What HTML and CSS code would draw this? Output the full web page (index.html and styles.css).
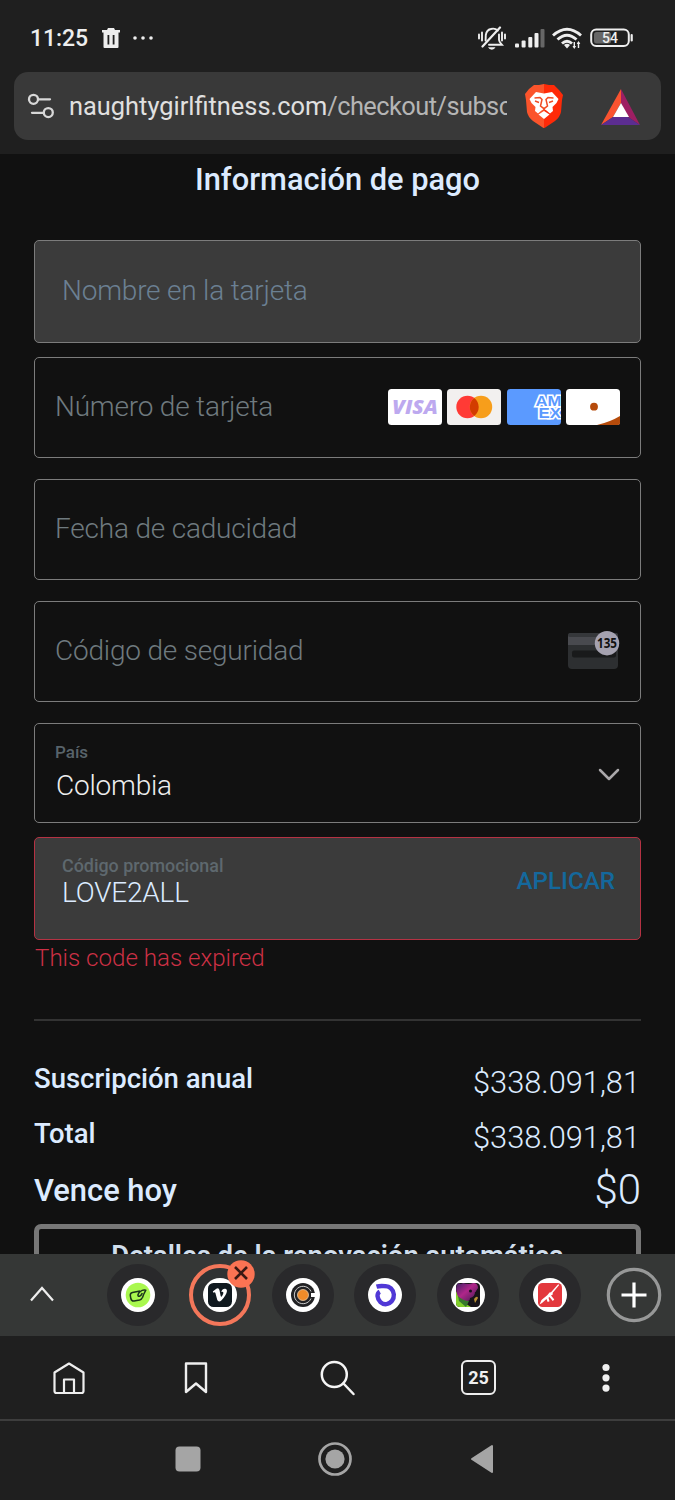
FILE: index.html
```html
<!DOCTYPE html>
<html lang="es">
<head>
<meta charset="utf-8">
<title>Información de pago</title>
<link rel="stylesheet" href="styles.css">
</head>
<body>
<div class="screen">
  <header class="browser-top">
    <div class="status">
      <span class="clock">11:25</span>
      <svg class="trash" width="18" height="20" viewBox="0 0 18 20"><path d="M0 2h5l1-2h6l1 2h5v2.400H0zM1.500 4h15v15a1 1 0 0 1-1 1h-13a1 1 0 0 1-1-1z" fill="#eee"/><path d="M6.400 7v9.500M11.600 7v9.500" stroke="#1f1f1f" stroke-width="1.800"/></svg>
      <svg class="dots" width="20" height="4" viewBox="0 0 20 4"><g fill="#eee"><circle cx="2" cy="2" r="1.800"/><circle cx="10" cy="2" r="1.800"/><circle cx="18" cy="2" r="1.800"/></g></svg>
      <svg class="signals" width="158" height="26" viewBox="0 0 158 26">
        <g fill="none" stroke="#eee" stroke-width="1.900" stroke-linecap="round">
          <path d="M2 8.500v4M5 6.500v8M25 6.500v8M28 8.500v4"/>
          <path d="M8.600 14.500l.2-5.500q.8-5 5-6 4-1.200 7 1.500M22 8.500v5.500q.2 2 2.800 4.700H12"/>
          <path d="M5.500 20.500L23 1.500" stroke-width="2.200"/>
        </g>
        <path d="M11 21.300h7.500q-1.200 2.400-3.700 2.400T11 21.300z" fill="#eee"/>
        <g fill="#eee"><rect x="38" y="17.500" width="4" height="4" rx="1"/><rect x="44.600" y="14.500" width="4" height="7" rx="1"/><rect x="51.300" y="11" width="4" height="10.500" rx="1"/><rect x="57.500" y="7" width="4" height="14.500" rx="1"/></g><rect x="63.500" y="3" width="4" height="18.500" rx="1" fill="#666"/>
        <g fill="none" stroke="#eee" stroke-width="2.900"><path d="M76 9.500Q90-3 104 9.500M80.500 13.500Q90 5 99.500 13.500M85 17.500Q90 13 95 17.500"/></g>
        <path d="M87 19q3-2.500 6 0l-3 3.500z" fill="#eee"/>
        <path d="M97.300 16v5.500M101.500 16v6" stroke="#eee" stroke-width="1.400"/><path d="M95.500 20h3.600l-1.800 3zM99.700 18h3.600l-1.800-3z" fill="#eee"/>
        <rect x="114.200" y="3.500" width="37.600" height="16.500" rx="5" fill="none" stroke="#eee" stroke-width="2"/><rect x="117" y="6" width="17" height="11.500" rx="2.500" fill="#666"/><path d="M154.700 9v5.500" stroke="#eee" stroke-width="2.200" stroke-linecap="round"/>
        <text class="battery" x="133" y="17" text-anchor="middle">54</text>
      </svg>
    </div>
    <div class="address">
      <svg class="tune" width="28" height="26" viewBox="0 0 28 26" fill="none" stroke="#d8d8d8" stroke-width="2.300" stroke-linecap="round"><circle cx="6.500" cy="6.300" r="4.500"/><path d="M11.500 6.300H23M5 19.800h11.500"/><circle cx="21.300" cy="19.600" r="4.500"/></svg>
      <div class="url">naughtygirlfitness.com<span class="path">/checkout/subsc</span></div>
      <svg class="brave" width="38" height="44" viewBox="0 0 38 44"><defs><linearGradient id="bravefill"><stop offset=".5" stop-color="#fb542b"/><stop offset=".5" stop-color="#ff2a08"/></linearGradient></defs><path d="M9 1h5l5-1 5 1h5l5 5 4 5-1 5-1 12q-1 5-6 9l-9 6q-2 2-4 0l-9-6q-5-4-6-9L1 16 0 10l4-5z" fill="url(#bravefill)"/><path d="M11 8l8 1.500L27 8l6.500 7-2 4-4 4 .5 4-3 2.500-3.500-3L19 25l-2.500 1.500-3.500 3-3-2.500.5-4-4-4-2-4z" fill="#fff"/><path d="M13.500 30.500L19 27l5.500 3.500L19 35z" fill="#fff"/><path d="M9.500 14l5.500-.5 2 2-1.500 6.500 3.500 2.700 3.500-2.700-1.500-6.500 2-2 5.500.5M10 17l4 1.500M28 17l-4 1.500M19 24.500V27" fill="none" stroke="#f04c24" stroke-width="1.500"/></svg>
      <svg class="bat" width="40" height="36" viewBox="0 0 40 36"><path d="M20 0L0 36l12-8 8-14z" fill="#fa5330"/><path d="M20 0l19 36-12-8-7-14z" fill="#9e1f63"/><path d="M0 36h39l-12-8H12z" fill="#5c2d91"/><path d="M20 14l8 14H12z" fill="#fff"/></svg>
    </div>
  </header>

  <main class="checkout">
    <h1 class="title">Información de pago</h1>
    <div class="field filled name"><span class="placeholder">Nombre en la tarjeta</span></div>
    <div class="field number">
      <span class="placeholder">Número de tarjeta</span>
      <div class="cards">
        <svg width="54" height="36" viewBox="0 0 54 36"><rect width="54" height="36" rx="3.500" fill="#fff"/><text class="visa" x="27" y="25.300" text-anchor="middle" textLength="46" lengthAdjust="spacingAndGlyphs">VISA</text></svg>
        <svg width="54" height="36" viewBox="0 0 54 36"><rect width="54" height="36" rx="3.500" fill="#f2f0ef"/><circle cx="20.500" cy="18" r="11.200" fill="#ff3a35"/><circle cx="34" cy="18" r="11.200" fill="#f79e1b"/><path d="M27.250 9.060a11.200 11.200 0 0 1 0 17.880a11.200 11.200 0 0 1 0-17.880z" fill="#d33c00"/></svg>
        <svg width="54" height="36" viewBox="0 0 54 36"><defs><clipPath id="amexclip"><rect width="54" height="36" rx="3.500"/></clipPath></defs><g clip-path="url(#amexclip)"><rect width="54" height="36" fill="#5b9aff"/><g class="amex"><text x="28.500" y="17" textLength="26" lengthAdjust="spacingAndGlyphs">AM</text><text x="31.500" y="29.300" textLength="22.500" lengthAdjust="spacingAndGlyphs">EX</text></g></g></svg>
        <svg width="54" height="36" viewBox="0 0 54 36"><rect width="54" height="36" rx="3.500" fill="#fff"/><circle cx="28" cy="17.700" r="3.900" fill="#b64b0b"/><path d="M31 36q13-3 23-9v7q0 2-2 2z" fill="#b64b0b"/></svg>
      </div>
    </div>
    <div class="field"><span class="placeholder">Fecha de caducidad</span></div>
    <div class="field"><span class="placeholder cvc">Código de seguridad</span>
      <svg class="cvcicon" width="52" height="40" viewBox="0 0 52 40"><rect x="0" y="3" width="50" height="36" rx="4" fill="#2d2f31"/><path d="M0 7q0-4 4-4h42q4 0 4 4v8H0z" fill="#494a4f"/><rect x="0" y="3" width="50" height="4" rx="2" fill="#35373a"/><rect x="4" y="20.500" width="44" height="7" rx="2" fill="#191a1b"/><circle cx="39" cy="13.200" r="12.200" fill="#a5a2b0"/><text class="cvcnum" x="39" y="18" text-anchor="middle" textLength="20" lengthAdjust="spacingAndGlyphs">135</text></svg>
    </div>
    <div class="field country">
      <div class="stack"><span class="label">País</span><span class="value">Colombia</span></div>
      <svg class="down" width="22" height="14" viewBox="0 0 22 14"><path d="M2 2l9 9 9-9" fill="none" stroke="#aaa8aa" stroke-width="2.500" stroke-linecap="round" stroke-linejoin="round"/></svg>
    </div>
    <div class="field filled promo">
      <div class="stack"><span class="label">Código promocional</span><span class="value">LOVE2ALL</span></div>
      <button class="apply">APLICAR</button>
    </div>
    <p class="error">This code has expired</p>
    <section class="summary">
      <div class="row"><b>Suscripción anual</b><span>$338.091,81</span></div>
      <div class="row"><b>Total</b><span>$338.091,81</span></div>
      <div class="row due"><b>Vence hoy</b><span>$0</span></div>
    </section>
    <div class="details"><span>Detalles de la renovación automática</span></div>
  </main>

  <nav class="tabs">
    <svg class="up" width="26" height="18" viewBox="0 0 26 18"><path d="M2 15.500L13 3l11 12.500" fill="none" stroke="#eee" stroke-width="2.200"/></svg>
    <div class="tab"><svg width="34" height="34" viewBox="0 0 34 34"><circle cx="17" cy="17" r="17" fill="#fff"/><circle cx="17" cy="17" r="12.300" fill="#a9f84f"/><path d="M19 13l-7.500 1.500q-2.500.5-2.200 3l.6 3.300q.6 2.500 3.200 2.200l5.500-1q2-.5 3-2.700l1-2.800 2.200-4.300q-3-.8-5.500 1.300-2 1.500-2.400 3.500 0 1.500 1.600 1.200 1.800-.5 2.800-3.200" fill="none" stroke="#1b351b" stroke-width="1.500" stroke-linejoin="round"/></svg></div>
    <div class="tab active"><svg width="34" height="34" viewBox="0 0 34 34"><circle cx="17" cy="17" r="17" fill="#fff"/><rect x="5" y="5" width="24" height="24" rx="5.500" fill="#10191f"/><path d="M9.800 13.600l3.500-2.800q2.400-1.500 3.200 1.500l1.100 5.500q.6 1.700 1.500.2 1.700-2.600 1.200-3.700-.5-.9-2-.3 1-3.500 3.700-3.300 2.500.4 1.800 3.300-.8 3.500-5.200 8.200-3.100 2.500-4.300-.3l-1.900-6.900q-.5-1.200-1.900-.3z" fill="#fff"/></svg>
      <svg class="close" width="28" height="28" viewBox="0 0 28 28"><circle cx="14" cy="14" r="13.700" fill="#fb7353"/><path d="M8 7l12 12M20 7L8 19" stroke="#3a1914" stroke-width="2.600"/></svg></div>
    <div class="tab"><svg width="34" height="34" viewBox="0 0 34 34"><circle cx="17" cy="17" r="17" fill="#fff"/><circle cx="17" cy="17" r="12" fill="#222224"/><path d="M25 13.500A8.700 8.700 0 1 0 25 20.500" fill="none" stroke="#ccc" stroke-width="1"/><path d="M25 15h5v4h-5z" fill="#fff"/><circle cx="17" cy="17" r="5.500" fill="#ef8b29" stroke="#e8c9a6" stroke-width=".8"/></svg></div>
    <div class="tab"><svg width="34" height="34" viewBox="0 0 34 34"><circle cx="17" cy="17" r="17" fill="#fff"/><path d="M8.500 8.700Q12.500 7.500 17 8.200A8.200 9 0 1 1 9.500 18q0-3 2.300-4.200" fill="none" stroke="#5038d6" stroke-width="4.400"/></svg></div>
    <div class="tab"><svg width="34" height="34" viewBox="0 0 34 34"><defs><linearGradient id="bear" x1="0" y1="0" x2="1" y2="1"><stop stop-color="#402066"/><stop offset=".45" stop-color="#b0268a"/><stop offset="1" stop-color="#361b4b"/></linearGradient></defs><circle cx="17" cy="17" r="17" fill="#fff"/><rect x="5" y="5" width="24" height="24" rx="4" fill="#191419"/><path d="M5 13l3 5 4 6 8 5H9q-4 0-4-4z" fill="#82cf2b"/><path d="M7 5q3 2 5 0 6 2 10 0 5 0 5 5l-2 3q0 6-4 8l-6 3q-7-1-9-8-2-7 1-11z" fill="url(#bear)"/><path d="M7 18q5 5 11 5l-3 6-7-6z" fill="#37782c"/><path d="M19 20q5-1 5-6l4-1-1 9-5 6q-5-1-3-8z" fill="#171419"/><path d="M23 21q3-4 4-1l-3 5z" fill="#b99132"/><circle cx="19.500" cy="13" r="1.500" fill="#15101a"/></svg></div>
    <div class="tab"><svg width="34" height="34" viewBox="0 0 34 34"><circle cx="17" cy="17" r="17" fill="#fff"/><rect x="5" y="5" width="24" height="24" rx="4.500" fill="#e3383d"/><path d="M6.500 26.500L8.500 22l6-5 2-2.500 1.500-.2 7.200-8 1 .8-6.700 8 .5 1.200-2 1.300 3.300 4-1.500 1.400-3.300-4-1 .8 1 3.500-1.800.8-1.200-3-4.500 3.900z" fill="#fff"/></svg></div>
    <svg class="plus" width="56" height="56" viewBox="0 0 56 56" fill="none"><circle cx="28" cy="28" r="25.700" stroke="#979898" stroke-width="3.200"/><path d="M15.500 28h25M28 15.500v25" stroke="#fff" stroke-width="3.200"/></svg>
  </nav>

  <nav class="toolbar">
    <svg width="34" height="34" viewBox="0 0 34 34" fill="none" stroke="#eee" stroke-width="2.200" stroke-linejoin="round"><path d="M2.500 11.500L17 2.500l14.500 9V30q0 2-2 2h-25q-2 0-2-2zM12 32V18.500h10V32"/></svg>
    <svg class="bookmark" width="26" height="34" viewBox="0 0 26 34" fill="none" stroke="#eee" stroke-width="2.400" stroke-linejoin="round"><path d="M3 2.500h20v28.500L13 22.500 3 31z"/></svg>
    <svg class="search" width="38" height="38" viewBox="0 0 38 38" fill="none" stroke="#f5f5f5" stroke-width="2.500" stroke-linecap="round"><circle cx="15.300" cy="15.500" r="12.500"/><path d="M24.500 24.500L34.500 35"/></svg>
    <div class="count">25</div>
    <svg class="more" width="8" height="30" viewBox="0 0 8 30" fill="#f0f0f0"><circle cx="4" cy="4.500" r="3.600"/><circle cx="4" cy="14.800" r="3.600"/><circle cx="4" cy="25.100" r="3.600"/></svg>
  </nav>

  <nav class="system">
    <svg width="26" height="26" viewBox="0 0 26 26"><rect x=".5" y=".5" width="25" height="25" rx="4" fill="#a5a5a5"/></svg>
    <svg class="home" width="34" height="34" viewBox="0 0 34 34"><circle cx="17" cy="17" r="15.500" fill="none" stroke="#a5a5a5" stroke-width="2.700"/><circle cx="17" cy="17" r="9.600" fill="#a5a5a5"/></svg>
    <svg class="back" width="24" height="30" viewBox="0 0 24 30"><path d="M2 15L22 2v26z" fill="#a5a5a5" stroke="#a5a5a5" stroke-width="2" stroke-linejoin="round"/></svg>
  </nav>
</div>
</body>
</html>
```
FILE: styles.css
```css
* { box-sizing: border-box; }
body { margin: 0; background: #111; font-family: Roboto, sans-serif; }
svg { display: block; flex: none; }
.screen { width: 675px; height: 1500px; display: flex; flex-direction: column; overflow: hidden; }

.browser-top { height: 154px; flex: none; background: #1f1f1f; }
.status { height: 72px; padding: 25px 40px 0 30px; display: flex; align-items: flex-start; }
.clock { width: 72px; font-size: 23px; line-height: 28px; font-weight: 500; color: #eee; letter-spacing: -.1px; }
.trash { margin-top: 3px; }
.dots { margin: 11px 0 0 13px; }
.signals { margin: 1px 0 0 auto; }
.battery { font: 500 14px Roboto, sans-serif; fill: #eee; }
.address { height: 68px; margin: 0 14px; padding: 0 20px 0 13px; background: #393939; border-radius: 14px; display: flex; align-items: center; }
.tune { margin-right: 14px; }
.url { width: 438px; overflow: hidden; white-space: nowrap; font-size: 25.400px; line-height: 36px; color: #e0e0e0; }
.path { color: #b5b5b5; letter-spacing: -.55px; }
.brave { margin-left: 18px; }
.bat { margin: 1px 0 0 auto; }

.checkout { height: 1100px; flex: none; overflow: hidden; padding: 6px 34px 0; background: #111; }
.title { margin: 0 0 40px; height: 40px; line-height: 40px; text-align: center; font-size: 30.800px; font-weight: 500; color: #dcebff; }
.field { height: 101px; margin-bottom: 21px; border: 1.500px solid #7c7c7c; border-radius: 5px; padding: 0 20px; display: flex; align-items: center; }
.filled { height: 103px; background: #3b3b3b; padding: 0 25px 0 27px; }
.name { margin-bottom: 14px; }
.placeholder { padding-bottom: 2px; font-size: 28px; font-weight: 300; line-height: 40px; letter-spacing: -.2px; color: #6f7a7f; }
.name .placeholder { color: #6b8093; }
.cards { margin: -1px 0 1px auto; display: flex; gap: 5.500px; }
.visa { font: italic 900 20px "Open Sans", sans-serif; fill: #bda9ef; }
.amex { font: 700 14px "Liberation Sans", sans-serif; fill: #5b9aff; stroke: #fff; stroke-width: 3px; paint-order: stroke; }
.cvcicon { margin: -4px 0 0 auto; }
.cvcnum { font: 700 14px "Noto Sans", sans-serif; fill: #111; }
.stack { display: flex; flex-direction: column; }
.country { height: 100px; margin-bottom: 14px; }
.country .stack { margin-top: -4px; }
.label { font-size: 17px; line-height: 24px; font-weight: 500; color: #58636a; }
.value { font-size: 28px; line-height: 32px; font-weight: 300; letter-spacing: -.2px; color: #eee; }
.country .value { margin: 6px 0 0 1px; }
.down { margin: 3px 0 0 auto; }
.promo { margin-bottom: 0; border-color: #b53243; }
.promo .stack { margin-top: -14px; }
.promo .label { font-size: 17.900px; line-height: 22px; color: #5e686e; }
.promo .value { line-height: 31px; color: #dcebff; }
.apply { margin: -15px 0 0 auto; padding: 0; border: 0; background: none; font: 500 24.200px/30px Roboto, sans-serif; color: #14689c; }
.error { margin: 3px 0 46px; padding-left: 1px; height: 30px; line-height: 30px; font-size: 24.100px; font-weight: 300; color: #cc3045; }
.summary { border-top: 2px solid #333; padding-top: 31px; }
.row { height: 55px; display: flex; justify-content: space-between; color: #dcebff; }
.row b { font-size: 27.500px; line-height: 54px; font-weight: 500; }
.row span { font-size: 30.800px; line-height: 62px; font-weight: 300; padding-right: 1px; }
.row.due { height: 61px; }
.row.due b { font-size: 30.900px; line-height: 58px; }
.row.due span { font-size: 42px; line-height: 56px; padding: 0; }
.details { height: 90px; margin-top: 1px; border: 5px solid #777; border-radius: 7px; text-align: center; font-size: 27.500px; line-height: 54px; font-weight: 600; letter-spacing: -.04px; color: #d0deec; white-space: nowrap; }

.tabs { height: 82px; flex: none; background: #353736; display: flex; align-items: center; padding: 0 13px 0 29px; }
.up { margin: -2px 51.500px 0 0; }
.tab { position: relative; width: 62px; height: 62px; flex: none; margin-right: 20.500px; border-radius: 50%; background: #29292b; display: grid; place-items: center; }
.active { background: #303233; border: 4px solid #f4775a; }
.close { position: absolute; right: -8px; top: -8px; }
.plus { margin-left: 4px; }

.toolbar { height: 85px; flex: none; background: #1f1f1f; border-bottom: 2px solid #3d3d3d; display: flex; align-items: center; padding-left: 52px; }
.bookmark { margin-left: 97px; }
.search { margin-left: 110px; }
.count { margin-left: 104px; width: 35px; height: 35px; border: 2.500px solid #eee; border-radius: 6px; display: grid; place-items: center; font-size: 18px; font-weight: 700; color: #f0f0f0; }
.more { margin-left: 106px; }
.system { height: 79px; flex: none; background: #1f1f1f; display: flex; align-items: center; padding: 0 0 3px 175px; }
.home { margin-left: 117px; }
.back { margin-left: 118px; }
```
